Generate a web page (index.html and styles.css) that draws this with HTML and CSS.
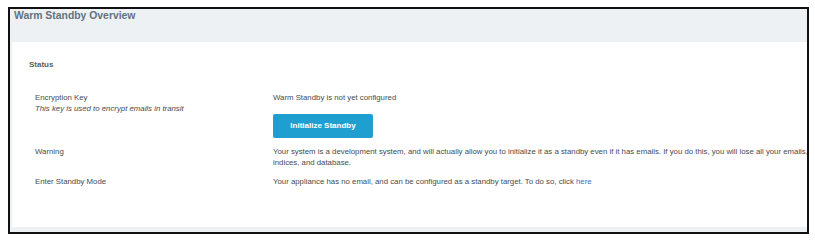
FILE: index.html
```html
<!DOCTYPE html>
<html>
<head>
<meta charset="utf-8">
<link rel="stylesheet" href="styles.css">
</head>
<body>
<div class="frame">
  <div class="header">Warm Standby Overview</div>
  <div class="panel">
    <div class="section-title">Status</div>
    <div class="row row-first">
      <div class="label">
        <div>Encryption Key</div>
        <div class="hint">This key is used to encrypt emails in transit</div>
      </div>
      <div class="value">
        <div>Warm Standby is not yet configured</div>
        <button class="btn">Initialize Standby</button>
      </div>
    </div>
    <div class="row row-second">
      <div class="label">Warning</div>
      <div class="value wide">Your system is a development system, and will actually allow you to initialize it as a standby even if it has emails. If you do this, you will lose all your emails, indices, and database.</div>
    </div>
    <div class="row">
      <div class="label">Enter Standby Mode</div>
      <div class="value">Your appliance has no email, and can be configured as a standby target. To do so, click <a class="link" href="#">here</a></div>
    </div>
  </div>
</div>
</body>
</html>
```
FILE: styles.css
```css
html, body {
  background: #ffffff;
}
body {
  margin: 7px 0 0 8px;
  font-family: "Liberation Sans", Arial, sans-serif;
  color: #474b50;
}
.frame {
  box-sizing: border-box;
  width: 801px;
  height: 227px;
  border: 2px solid #111111;
  background: #edf1f4;
  overflow: hidden;
}
.header {
  height: 33px;
  padding-left: 4px;
  padding-top: 1px;
  box-sizing: border-box;
  font-size: 10.4px;
  font-weight: 700;
  line-height: 12px;
  color: #637180;
}
.panel {
  margin-left: 2px;
  width: 900px;
  height: 185px;
  box-sizing: border-box;
  background: #ffffff;
  padding: 17px 0 0 17px;
  font-size: 7.8px;
  line-height: 11.5px;
}
.section-title {
  font-size: 8px;
  font-weight: 700;
  color: #5b6065;
  margin-bottom: 21px;
}
.row {
  display: flex;
  padding-left: 6px;
  margin-bottom: 7px;
}
.row-first {
  margin-bottom: 8px;
}
.label {
  width: 238px;
  flex: none;
}
.hint {
  font-style: italic;
}
.value.wide {
  width: 545px;
}
.btn {
  display: block;
  margin-top: 10.5px;
  width: 100px;
  height: 24px;
  border: none;
  border-radius: 2px;
  background: #1f9fd0;
  color: #ffffff;
  font-family: "Liberation Sans", Arial, sans-serif;
  font-size: 8px;
  font-weight: 700;
  padding: 0;
}
.link {
  color: #3a72b6;
  text-decoration: none;
}
```
